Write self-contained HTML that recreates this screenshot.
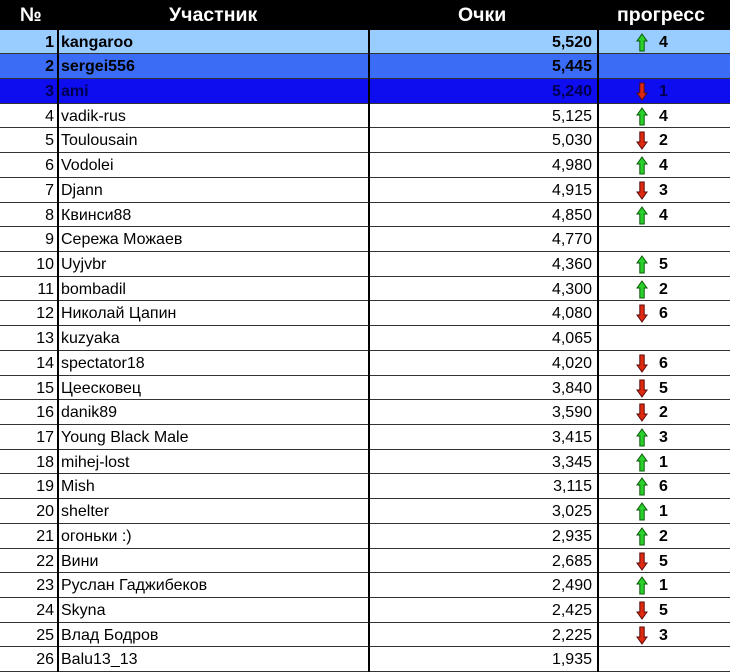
<!DOCTYPE html>
<html><head><meta charset="utf-8"><style>
*{margin:0;padding:0;box-sizing:border-box}
body{width:730px;height:672px;overflow:hidden;background:#fff;font-family:"Liberation Sans",Arial,sans-serif;position:relative}
.hd{position:absolute;left:0;top:0;width:730px;height:30px;background:#000;color:#fff;font-weight:bold;font-size:19.5px}
.hd span{position:absolute;top:4px}
.rows{position:absolute;left:0;top:29.5px;width:730px}
.r{height:24.72px;border-bottom:1.5px solid #333;position:relative;font-size:16px;color:#000}
.r div{position:absolute;top:1px;height:100%;line-height:24px}
.n{left:0;width:57px;text-align:right;padding-right:3px}
.nm{left:61px}
.p{left:370px;width:222px;text-align:right}
.g{left:659px;font-weight:bold}
.v{position:absolute;top:30px;bottom:0;width:2px;background:#000}
.b{font-weight:bold}
.r1{background:#99ccff}.r2{background:#3a6cf6}.r3{background:#0d0df0;color:#000050}
</style></head><body>
<div class="hd"><span style="left:20px">№</span><span style="left:169px">Участник</span><span style="left:458px">Очки</span><span style="left:617px">прогресс</span></div>
<div class="rows" id="rows">
<div class="r r1 b"><div class="n">1</div><div class="nm">kangaroo</div><div class="p">5,520</div><svg style="position:absolute;left:636px;top:3px" width="12" height="19" viewBox="0 0 12 19"><path d="M6 1L11 8H8.2V18H3.8V8H1Z" fill="#2bd12b" stroke="#0a5a0a" stroke-width="1"/></svg><div class="g">4</div></div>
<div class="r r2 b"><div class="n">2</div><div class="nm">sergei556</div><div class="p">5,445</div></div>
<div class="r r3 b"><div class="n">3</div><div class="nm">ami</div><div class="p">5,240</div><svg style="position:absolute;left:636px;top:3px" width="12" height="19" viewBox="0 0 12 19"><path d="M3.8 1H8.2V11H11L6 18L1 11H3.8Z" fill="#e02a10" stroke="#5a0a0a" stroke-width="1"/></svg><div class="g">1</div></div>
</div>
<div class="v" style="left:57px"></div><div class="v" style="left:368px"></div><div class="v" style="left:597px"></div>
<script>
var d=[["vadik-rus","5,125","u",4],["Toulousain","5,030","d",2],["Vodolei","4,980","u",4],["Djann","4,915","d",3],["Квинси88","4,850","u",4],["Сережа Можаев","4,770","",""],["Uyjvbr","4,360","u",5],["bombadil","4,300","u",2],["Николай Цапин","4,080","d",6],["kuzyaka","4,065","",""],["spectator18","4,020","d",6],["Цеесковец","3,840","d",5],["danik89","3,590","d",2],["Young Black Male","3,415","u",3],["mihej-lost","3,345","u",1],["Mish","3,115","u",6],["shelter","3,025","u",1],["огоньки :)","2,935","u",2],["Вини","2,685","d",5],["Руслан Гаджибеков","2,490","u",1],["Skyna","2,425","d",5],["Влад Бодров","2,225","d",3],["Balu13_13","1,935","",""]];
var up='<svg style="position:absolute;left:636px;top:3px" width="12" height="19" viewBox="0 0 12 19"><path d="M6 1L11 8H8.2V18H3.8V8H1Z" fill="#2bd12b" stroke="#0a5a0a" stroke-width="1"/></svg>';
var dn='<svg style="position:absolute;left:636px;top:3px" width="12" height="19" viewBox="0 0 12 19"><path d="M3.8 1H8.2V11H11L6 18L1 11H3.8Z" fill="#e02a10" stroke="#5a0a0a" stroke-width="1"/></svg>';
var h='';d.forEach(function(x,i){h+='<div class="r"><div class="n">'+(i+4)+'</div><div class="nm">'+x[0]+'</div><div class="p">'+x[1]+'</div>'+(x[2]=='u'?up:x[2]=='d'?dn:'')+'<div class="g">'+x[3]+'</div></div>';});
document.getElementById('rows').insertAdjacentHTML('beforeend',h);
</script>
</body></html>
